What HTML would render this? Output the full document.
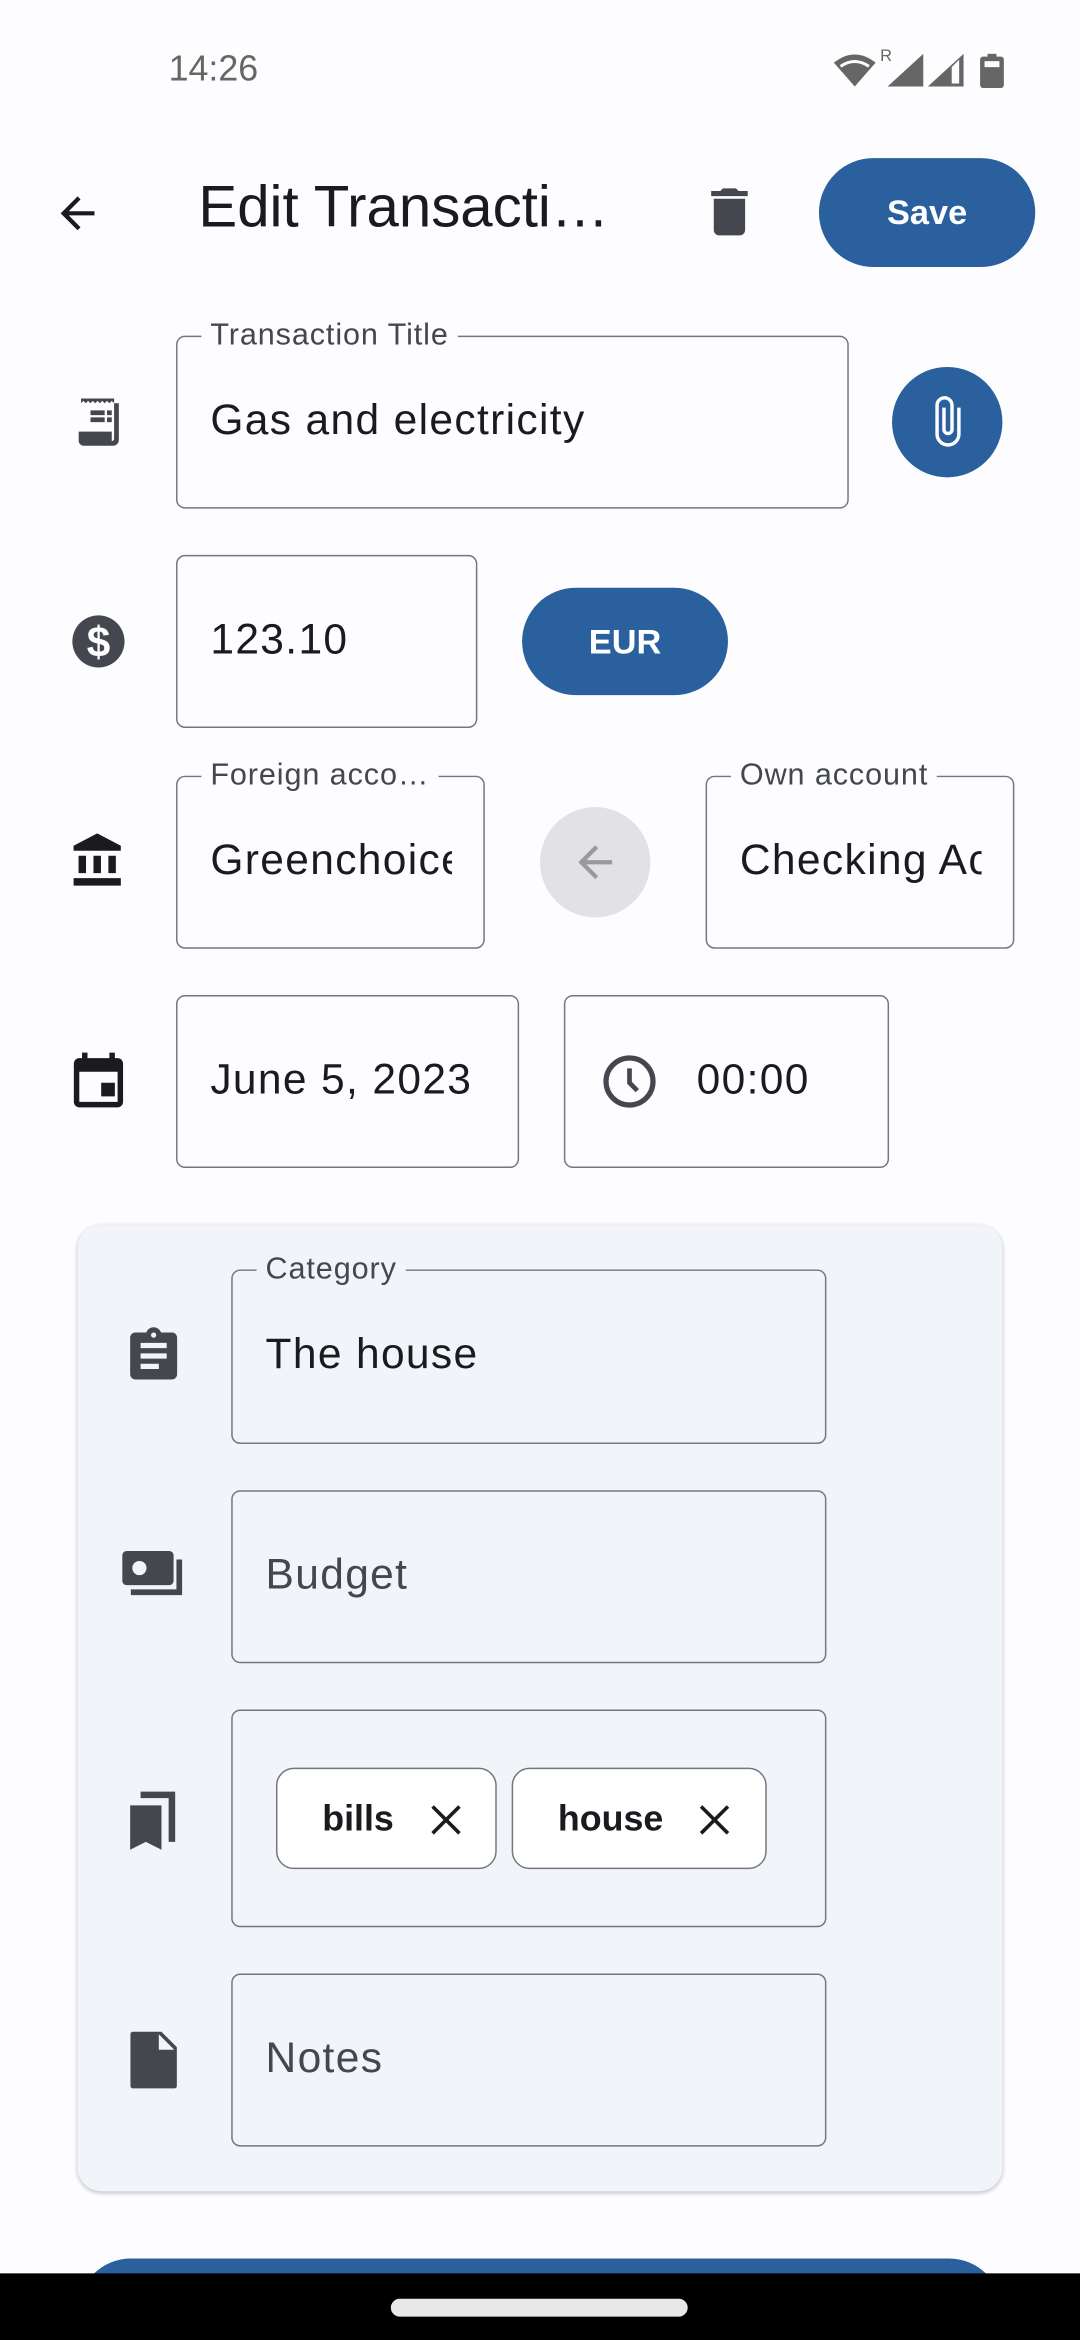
<!DOCTYPE html>
<html><head><meta charset="utf-8"><style>
*{margin:0;padding:0;box-sizing:border-box}
html,body{width:1080px;height:2340px;overflow:hidden;background:#fdfcff}
#s{position:absolute;left:0;top:0;width:724px;height:1568.6px;overflow:hidden;transform:scale(1.49171);transform-origin:0 0;font-family:"Liberation Sans",sans-serif;color:#1b1b1f}
.a{position:absolute}
.box{position:absolute;border:1.5px solid #74777f;border-radius:6px}
.lbl{position:absolute;top:-14px;left:16px;padding:0 6px;font-size:20.5px;letter-spacing:0.6px;color:#44474e;background:#fdfcff;white-space:nowrap;line-height:26px}
.val{position:absolute;left:22px;font-size:28.5px;letter-spacing:0.9px;white-space:nowrap;overflow:hidden;line-height:32px}
svg{position:absolute}
</style></head><body><div id="s">
<!-- status bar -->
<div class="a" style="left:113px;top:33px;font-size:24px;color:#666">14:26</div>
<svg style="left:559px;top:36px" width="28" height="22" viewBox="0 0 28 22"><path d="M0 6 Q14 -5 28 6 L14 22Z" fill="#666"/><path d="M4.5 8.5 Q14 2 23.5 8.5" stroke="#fdfcff" stroke-width="2" fill="none"/></svg>
<div class="a" style="left:590px;top:32px;font-size:11px;color:#666">R</div>
<svg style="left:595px;top:36px" width="24" height="22"><path d="M0 22 L24 0 V22Z" fill="#666"/></svg>
<svg style="left:622px;top:36px" width="24" height="22"><path d="M0 22 L24 0 V22Z" fill="#666"/><path d="M16 9 V20 H21 V4Z" fill="#fdfcff"/></svg>
<svg style="left:657px;top:36px" width="16" height="23"><rect x="5" y="0" width="6" height="3" fill="#666"/><rect x="0" y="2" width="16" height="21" rx="2" fill="#666"/><rect x="3" y="5" width="10" height="4" fill="#fdfcff"/></svg>
<!-- app bar -->
<svg style="left:35px;top:126px" width="34" height="34" viewBox="0 0 24 24"><path d="M20 11H7.83l5.59-5.59L12 4l-8 8 8 8 1.41-1.41L7.83 13H20v-2z" fill="#1b1b1f"/></svg>
<div class="a" style="left:133px;top:118px;font-size:39px;color:#1b1b1f">Edit Transacti…</div>
<svg style="left:468px;top:121px" width="42" height="42" viewBox="0 0 24 24"><path d="M6 19c0 1.1.9 2 2 2h8c1.1 0 2-.9 2-2V7H6v12zM19 4h-3.5l-1-1h-5l-1 1H5v2h14V4z" fill="#44474e"/></svg>
<div class="a" style="left:549px;top:106px;width:145px;height:73px;border-radius:37px;background:#29609d;color:#fff;font-weight:bold;font-size:23px;text-align:center;line-height:73px">Save</div>
<!-- title -->
<svg style="left:48px;top:264px" width="38" height="38" viewBox="0 0 24 24"><path d="M4 2v2l1-1 1 1 1-1 1 1 1-1 1 1 1-1 1 1 1-1 1 1 1-1 1 1 1-1 1 1V2zM5 4h13v15c0 .6-.4 1-1 1V16H3v4c0 1 1 2 2 2h12.5c1.4 0 2.5-1.1 2.5-2.5V4zM8 7h6v2H8zm7 0h2v2h-2zM8 10h6v2H8zm7 0h2v2h-2z" fill="#44474e"/></svg>
<div class="box" style="left:118px;top:225px;width:451px;height:116px"><div class="lbl">Transaction Title</div><div class="val" style="top:40px">Gas and electricity</div></div>
<div class="a" style="left:598px;top:246px;width:74px;height:74px;border-radius:50%;background:#29609d"></div>
<svg style="left:617px;top:264px" width="37" height="37" viewBox="0 0 24 24"><path d="M16.5 6v11.5c0 2.21-1.79 4-4 4s-4-1.790-4-4V5a2.5 2.5 0 0 1 5 0v10.5c0 .55-.45 1-1 1s-1-.45-1-1V6H10v9.5a2.5 2.5 0 0 0 5 0V5c0-2.21-1.79-4-4-4S7 2.79 7 5v12.5c0 3.04 2.46 5.5 5.5 5.5s5.5-2.46 5.5-5.5V6h-1.5z" fill="#fff" transform="translate(-0.5 0)"/></svg>
<!-- amount -->
<svg style="left:46px;top:410px" width="40" height="40" viewBox="0 0 24 24"><circle cx="12" cy="12" r="10.5" fill="#44474e"/><text x="12" y="18" font-family="Liberation Sans" font-weight="bold" font-size="17" fill="#fff" text-anchor="middle">$</text></svg>
<div class="box" style="left:118px;top:372px;width:202px;height:116px"><div class="val" style="top:40px">123.10</div></div>
<div class="a" style="left:350px;top:394px;width:138px;height:72px;border-radius:36px;background:#29609d;color:#fff;font-weight:bold;font-size:23px;text-align:center;line-height:72px">EUR</div>
<!-- accounts -->
<svg style="left:46px;top:556px" width="40" height="42" viewBox="0 0 24 24"><path d="M4 10v7h3v-7H4zm6 0v7h3v-7h-3zM2 22h19v-3H2v3zm14-12v7h3v-7h-3zm-4.5-9L2 6v2h19V6l-9.5-5z" fill="#1b1b1f"/></svg>
<div class="box" style="left:118px;top:520px;width:207px;height:116px"><div class="lbl">Foreign acco…</div><div class="val" style="top:40px;width:162px">Greenchoice</div></div>
<div class="a" style="left:362px;top:541px;width:74px;height:74px;border-radius:50%;background:#e2e2e4"></div>
<svg style="left:382px;top:561px" width="34" height="34" viewBox="0 0 24 24"><path d="M20 11H7.83l5.59-5.59L12 4l-8 8 8 8 1.41-1.41L7.83 13H20v-2z" fill="#9a9a9e"/></svg>
<div class="box" style="left:473px;top:520px;width:207px;height:116px"><div class="lbl">Own account</div><div class="val" style="top:40px;width:162px">Checking Account</div></div>
<!-- date -->
<svg style="left:44px;top:702px" width="44" height="44" viewBox="0 0 24 24"><path d="M19 4h-1V2h-2v2H8V2H6v2H5c-1.1 0-2 .9-2 2v14c0 1.1.9 2 2 2h14c1.1 0 2-.9 2-2V6c0-1.1-.9-2-2-2zm0 16H5V9h14v11zm-6-7h5v5h-5z" fill="#1b1b1f"/></svg>
<div class="box" style="left:118px;top:667px;width:230px;height:116px"><div class="val" style="top:40px">June 5, 2023</div></div>
<div class="box" style="left:378px;top:667px;width:218px;height:116px"><div class="val" style="top:40px;left:88px">00:00</div></div>
<svg style="left:401px;top:704px" width="42" height="42" viewBox="0 0 24 24"><circle cx="12" cy="12" r="9" stroke="#44474e" stroke-width="2" fill="none"/><path d="M12 7v5.5l3 3" stroke="#44474e" stroke-width="1.8" fill="none"/></svg>
<!-- card -->
<div class="a" style="left:52px;top:821px;width:620px;height:648px;background:#f1f4f9;border-radius:16px;box-shadow:0 1px 3px rgba(0,0,0,.25)"></div>
<svg style="left:82px;top:888px" width="42" height="42" viewBox="0 0 24 24"><path d="M19 3h-4.18C14.4 1.84 13.3 1 12 1s-2.4.84-2.82 2H5c-1.1 0-2 .9-2 2v14c0 1.1.9 2 2 2h14c1.1 0 2-.9 2-2V5c0-1.1-.9-2-2-2zm-7 0c.55 0 1 .45 1 1s-.45 1-1 1-1-.45-1-1 .45-1 1-1zm2 14H7v-2h7v2zm3-4H7v-2h10v2zm0-4H7V7h10v2z" fill="#44474e"/></svg>
<div class="box" style="left:155px;top:851px;width:399px;height:117px"><div class="lbl" style="background:#f1f4f9">Category</div><div class="val" style="top:40px">The house</div></div>
<svg style="left:80px;top:1034px" width="46" height="42" viewBox="0 0 24 22"><rect x="1" y="3" width="18" height="12" rx="1.5" fill="#44474e"/><circle cx="7" cy="9" r="2.5" fill="#f1f4f9"/><path d="M4 17.5h17V6" stroke="#44474e" stroke-width="2" fill="none"/></svg>
<div class="box" style="left:155px;top:999px;width:399px;height:116px"><div class="val" style="top:40px;color:#44474e">Budget</div></div>
<svg style="left:82px;top:1196px" width="42" height="46" viewBox="0 0 24 26"><path d="M3 8h12v17l-6-3-6 3z" fill="#44474e"/><path d="M7 4h12v18" stroke="#44474e" stroke-width="2.5" fill="none"/></svg>
<div class="box" style="left:155px;top:1146px;width:399px;height:146px"></div>
<div class="a" style="left:185px;top:1185px;width:148px;height:68px;border:1.5px solid #74777f;border-radius:12px;background:#fff"><span class="a" style="left:30px;top:20px;font-size:24px;font-weight:bold">bills</span><svg style="left:101px;top:22px" width="24" height="24" viewBox="0 0 24 24"><path d="M3 3L21 21M21 3L3 21" stroke="#1b1b1f" stroke-width="2.4"/></svg></div>
<div class="a" style="left:343px;top:1185px;width:171px;height:68px;border:1.5px solid #74777f;border-radius:12px;background:#fff"><span class="a" style="left:30px;top:20px;font-size:24px;font-weight:bold">house</span><svg style="left:123px;top:22px" width="24" height="24" viewBox="0 0 24 24"><path d="M3 3L21 21M21 3L3 21" stroke="#1b1b1f" stroke-width="2.4"/></svg></div>
<svg style="left:84px;top:1360px" width="38" height="42" viewBox="0 0 22 24"><path d="M3 1h11l6 6v15c0 .6-.4 1-1 1H3c-.6 0-1-.4-1-1V2c0-.6.4-1 1-1zm10 1v6h6zM6 14h10v2H6zm0 4h10v2H6z" fill="#44474e"/></svg>
<div class="box" style="left:155px;top:1323px;width:399px;height:116px"><div class="val" style="top:40px;color:#44474e">Notes</div></div>
<!-- bottom -->
<div class="a" style="left:52px;top:1514px;width:620px;height:40px;border-radius:36px 36px 0 0;background:#29609d"></div>
<div class="a" style="left:0;top:1524px;width:724px;height:45px;background:#000"></div>
<div class="a" style="left:262px;top:1541px;width:199px;height:12px;border-radius:6px;background:#e8e8e8"></div>
</div></body></html>
